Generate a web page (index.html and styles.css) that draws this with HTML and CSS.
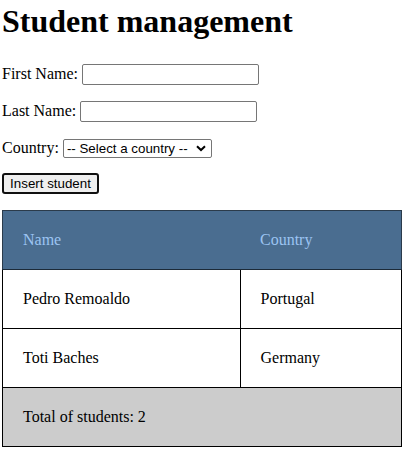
FILE: index.html
```html
<!DOCTYPE html>
<html>
<head>
<meta charset="utf-8">
<link rel="stylesheet" href="styles.css">
</head>
<body>
<h1 class="title">Student management</h1>
<form class="form">
  <p class="row r1"><label>First Name: <input class="field" type="text"></label></p>
  <p class="row r2"><label>Last Name: <input class="field" type="text"></label></p>
  <p class="row r3"><label>Country: <span class="select-wrap"><select class="select"><option>-- Select a country --</option></select><svg class="chev" width="10" height="7" viewBox="0 0 10 7"><path d="M1 1.2 L5 5 L9 1.2" fill="none" stroke="#000" stroke-width="2"/></svg></span></label></p>
  <p class="row r4"><button class="btn" type="button">Insert student</button></p>
</form>
<table class="students">
  <thead>
    <tr class="head"><th class="c1">Name</th><th class="c2">Country</th></tr>
  </thead>
  <tbody>
    <tr><td>Pedro Remoaldo</td><td>Portugal</td></tr>
    <tr><td>Toti Baches</td><td>Germany</td></tr>
  </tbody>
  <tfoot>
    <tr class="foot"><td colspan="2">Total of students: 2</td></tr>
  </tfoot>
</table>
</body>
</html>
```
FILE: styles.css
```css
html, body {
  background: #fff;
}
body {
  margin: 2px;
  font-family: "Liberation Serif", "Times New Roman", serif;
  font-size: 16px;
  color: #000;
}
.title {
  font-size: 32px;
  font-weight: bold;
  margin: 1px 0 0;
  line-height: 37px;
}
.form {
  margin: 0;
}
.row {
  margin: 16px 0 0;
  line-height: 18px;
}
.r1 {
  margin-top: 24px;
}
.r3 {
  margin-top: 17px;
}
.r4 {
  margin-top: 15px;
}
.field {
  box-sizing: border-box;
  width: 177px;
  height: 21px;
  border: 1px solid #767676;
  border-radius: 2px;
  padding: 1px 2px;
  font-family: "Liberation Sans", Arial, sans-serif;
  font-size: 13.33px;
  vertical-align: baseline;
}
.select-wrap {
  position: relative;
  display: inline-block;
}
.select {
  -webkit-appearance: none;
  appearance: none;
  box-sizing: border-box;
  width: 149px;
  height: 19px;
  border: 1px solid #767676;
  border-radius: 2px;
  padding: 0 0 0 3px;
  font-family: "Liberation Sans", Arial, sans-serif;
  font-size: 13.33px;
  background: #fff;
  color: #000;
}
.chev {
  position: absolute;
  right: 6px;
  top: 6px;
  pointer-events: none;
}
.btn {
  box-sizing: border-box;
  width: 97px;
  height: 21px;
  border: 2px solid #101010;
  border-radius: 3px;
  background: #efefef;
  font-family: "Liberation Sans", Arial, sans-serif;
  font-size: 13.33px;
  padding: 0 6px;
  color: #000;
}
.students {
  margin-top: 16px;
  width: 400px;
  border-collapse: collapse;
  border: 1px solid #000;
}
.students th, .students td {
  padding: 20px;
  border: 1px solid #000;
  text-align: left;
  font-weight: normal;
  line-height: 18px;
}
.head {
  background: #4a6d90;
}
.head th {
  color: #9cc4f2;
  border: none;
  border-bottom: 1px solid #1c2a38;
}
.students thead {
  border: 1px solid #2b3b4b;
}
.c1 {
  width: 197px;
}
.foot {
  background: #cccccc;
}
```
